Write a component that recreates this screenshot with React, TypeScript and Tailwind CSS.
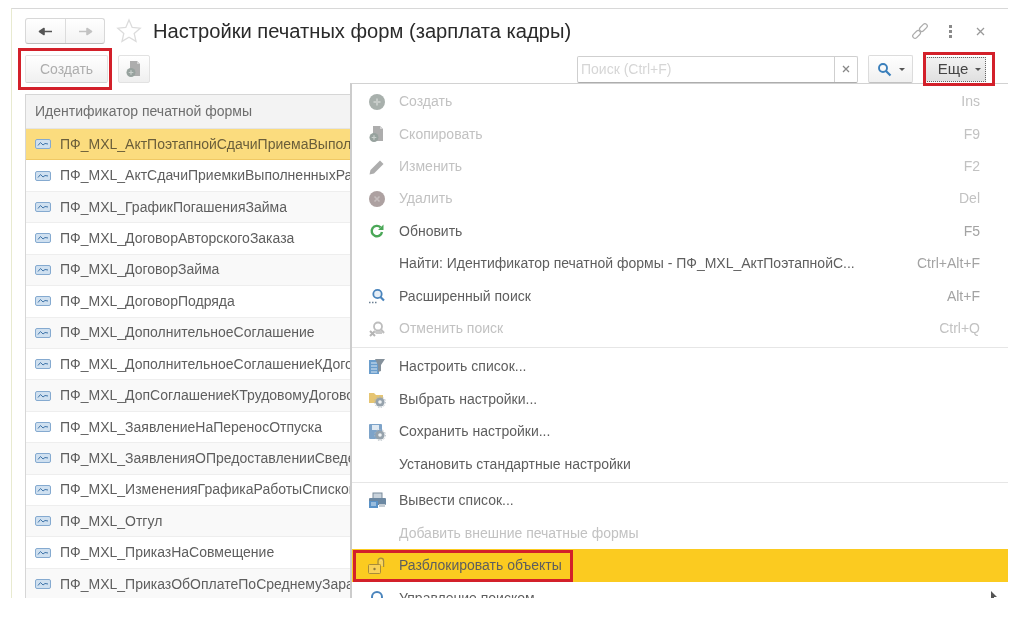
import type { ReactNode } from 'react';

const rows = [
  'ПФ_MXL_АктПоэтапнойСдачиПриемаВыполненныхРабот',
  'ПФ_MXL_АктСдачиПриемкиВыполненныхРабот',
  'ПФ_MXL_ГрафикПогашенияЗайма',
  'ПФ_MXL_ДоговорАвторскогоЗаказа',
  'ПФ_MXL_ДоговорЗайма',
  'ПФ_MXL_ДоговорПодряда',
  'ПФ_MXL_ДополнительноеСоглашение',
  'ПФ_MXL_ДополнительноеСоглашениеКДоговору',
  'ПФ_MXL_ДопСоглашениеКТрудовомуДоговору',
  'ПФ_MXL_ЗаявлениеНаПереносОтпуска',
  'ПФ_MXL_ЗаявленияОПредоставленииСведений',
  'ПФ_MXL_ИзмененияГрафикаРаботыСпискомСотрудников',
  'ПФ_MXL_Отгул',
  'ПФ_MXL_ПриказНаСовмещение',
  'ПФ_MXL_ПриказОбОплатеПоСреднемуЗаработку',
];

function RowIcon() {
  return (
    <svg width="16" height="10" viewBox="0 0 16 10" className="shrink-0">
      <rect x="0.5" y="0.5" width="15" height="9" rx="1.5" fill="#cfe0f0" stroke="#85aad0" />
      <path d="M3 6.5 L5.5 3.5 L8 6 L10 4.5 L13 5" fill="none" stroke="#3f74a8" strokeWidth="1" />
    </svg>
  );
}

function CopyIcon() {
  return (
    <svg width="18" height="18" viewBox="0 0 18 18">
      <path d="M5 1h7l3 3v12H5z" fill="#adadad" />
      <path d="M12 1l3 3h-3z" fill="#d2d2d2" />
      <circle cx="6" cy="12.5" r="4.5" fill="#97a29e" />
      <path d="M6 10.2v4.6M3.7 12.5h4.6" stroke="#c9cfcc" strokeWidth="1.2" />
    </svg>
  );
}

const icons: Record<string, ReactNode> = {
  plus: (
    <svg width="18" height="18" viewBox="0 0 18 18">
      <circle cx="9" cy="9" r="8" fill="#a8b0ac" />
      <path d="M9 5.5v7M5.5 9h7" stroke="#c6cbc8" strokeWidth="2" />
    </svg>
  ),
  copy: <CopyIcon />,
  pencil: (
    <svg width="18" height="18" viewBox="0 0 18 18">
      <path d="M1.5 16.5l1-4.5L12 2.5 15.5 6 6 15.5z" fill="#adadad" />
    </svg>
  ),
  del: (
    <svg width="18" height="18" viewBox="0 0 18 18">
      <circle cx="9" cy="9" r="8" fill="#ada1a1" />
      <path d="M6.5 6.5l5 5M11.5 6.5l-5 5" stroke="#c6bebe" strokeWidth="1.6" />
    </svg>
  ),
  refresh: (
    <svg width="18" height="18" viewBox="0 0 18 18">
      <path d="M14 10a5.2 5.2 0 1 1-1.4-4.6" fill="none" stroke="#4aa757" strokeWidth="2.4" />
      <path d="M15.5 2.5v5.5H10z" fill="#4aa757" />
    </svg>
  ),
  search: (
    <svg width="18" height="18" viewBox="0 0 18 18">
      <circle cx="9.5" cy="7" r="4.2" fill="#e6eef6" stroke="#4a84bc" strokeWidth="1.8" />
      <path d="M12.5 10l3.5 3.5" stroke="#4a84bc" strokeWidth="2.2" />
      <path d="M1 15.5h8" stroke="#6b7f92" strokeWidth="1.4" strokeDasharray="1.5 1.5" />
    </svg>
  ),
  cancel: (
    <svg width="18" height="18" viewBox="0 0 18 18">
      <circle cx="10" cy="6.5" r="4" fill="none" stroke="#bdbdbd" strokeWidth="1.8" />
      <path d="M13 9.5l3 3.5" stroke="#bdbdbd" strokeWidth="2" />
      <path d="M2 11l5 5M7 11l-5 5" stroke="#b5b5b5" strokeWidth="2" />
      <path d="M6 11h8v3H8z" fill="#c9c9c9" />
    </svg>
  ),
  filter: (
    <svg width="18" height="18" viewBox="0 0 18 18">
      <rect x="1" y="2" width="10" height="14" fill="#6a9dcc" />
      <path d="M3 5h6M3 8h6M3 11h6M3 14h6" stroke="#dbe8f3" strokeWidth="1" />
      <path d="M7 1h10l-4 6v6l-3 1V7z" fill="#85919b" />
    </svg>
  ),
  folder: (
    <svg width="18" height="18" viewBox="0 0 18 18">
      <path d="M1 3h5l2 2h7v8H1z" fill="#e6c572" />
      <circle cx="12" cy="12" r="4.6" fill="#96a2ac" />
      <circle cx="12" cy="12" r="1.8" fill="#eef1f3" />
      <circle cx="12" cy="12" r="5.4" fill="none" stroke="#aeb7be" strokeWidth="1" strokeDasharray="1.5 1.5" />
    </svg>
  ),
  save: (
    <svg width="18" height="18" viewBox="0 0 18 18">
      <rect x="1" y="1" width="13" height="15" rx="1" fill="#7da3c9" />
      <rect x="4" y="2" width="7" height="5" fill="#dfe9f2" />
      <circle cx="12" cy="12" r="4.6" fill="#96a2ac" />
      <circle cx="12" cy="12" r="1.8" fill="#eef1f3" />
      <circle cx="12" cy="12" r="5.4" fill="none" stroke="#aeb7be" strokeWidth="1" strokeDasharray="1.5 1.5" />
    </svg>
  ),
  print: (
    <svg width="18" height="18" viewBox="0 0 18 18">
      <rect x="5" y="1" width="9" height="6" fill="#c9d3dc" stroke="#7a8b9b" />
      <rect x="1" y="6" width="17" height="7" rx="1" fill="#6c88a2" />
      <rect x="1" y="9" width="9" height="7" fill="#5a92c7" />
      <path d="M3 11h5M3 13h5" stroke="#dbe8f3" strokeWidth="1" />
      <rect x="11" y="12" width="6" height="3" fill="#c4ccd3" />
    </svg>
  ),
  lock: (
    <svg width="20" height="18" viewBox="0 0 20 18">
      <path d="M11 7V4a2.8 2.8 0 0 1 5.6 0v6" fill="none" stroke="#a08a45" strokeWidth="1.2" />
      <path d="M13 7V4a1 1 0 0 1 2 0v5" fill="none" stroke="#f3dc98" strokeWidth="1" />
      <rect x="1.5" y="7.5" width="12" height="9" rx="1" fill="#f8d158" stroke="#a88c3a" />
      <circle cx="7.5" cy="12" r="1.2" fill="#8f7a3a" />
    </svg>
  ),
  manage: (
    <svg width="18" height="18" viewBox="0 0 18 18">
      <circle cx="9" cy="8" r="5" fill="none" stroke="#4a84bc" strokeWidth="2" />
    </svg>
  ),
};

type Item = { label: string; icon?: string; hint?: string; off?: boolean; active?: boolean; sep?: string };

const menu: Item[] = [
  { label: 'Создать', icon: 'plus', hint: 'Ins', off: true },
  { label: 'Скопировать', icon: 'copy', hint: 'F9', off: true },
  { label: 'Изменить', icon: 'pencil', hint: 'F2', off: true },
  { label: 'Удалить', icon: 'del', hint: 'Del', off: true },
  { label: 'Обновить', icon: 'refresh', hint: 'F5' },
  { label: 'Найти: Идентификатор печатной формы - ПФ_MXL_АктПоэтапнойС...', hint: 'Ctrl+Alt+F' },
  { label: 'Расширенный поиск', icon: 'search', hint: 'Alt+F' },
  { label: 'Отменить поиск', icon: 'cancel', hint: 'Ctrl+Q', off: true, sep: 'h-[6px]' },
  { label: 'Настроить список...', icon: 'filter' },
  { label: 'Выбрать настройки...', icon: 'folder' },
  { label: 'Сохранить настройки...', icon: 'save' },
  { label: 'Установить стандартные настройки', sep: 'h-[4.4px]' },
  { label: 'Вывести список...', icon: 'print' },
  { label: 'Добавить внешние печатные формы', off: true },
  { label: 'Разблокировать объекты', icon: 'lock', active: true },
  { label: 'Управление поиском', icon: 'manage' },
];

function MenuRow({ item }: { item: Item }) {
  return (
    <>
      <div className={`flex h-[32.4px] shrink-0 items-center pl-[15px] pr-[29px] ${item.active ? 'bg-[#fbcb20]' : ''}`}>
        <span className="flex w-[20px] shrink-0 justify-center">{item.icon ? icons[item.icon] : null}</span>
        <span className={`ml-[12px] flex-1 whitespace-nowrap ${item.off ? 'text-[#c2c2c2]' : 'text-[#5e5e5e]'}`}>{item.label}</span>
        {item.hint && <span className={item.off ? 'text-[#c2c2c2]' : 'text-[#a3a3a3]'}>{item.hint}</span>}
      </div>
      {item.sep && (
        <div className={`flex shrink-0 items-center ${item.sep}`}>
          <div className="h-px w-full bg-[#e6e6e6]" />
        </div>
      )}
    </>
  );
}

function Caret() {
  return <span className="ml-[7px] inline-block h-0 w-0 border-x-[3px] border-t-[3px] border-x-transparent border-t-[#555]" />;
}

export default function App() {
  return (
    <div className="relative h-[622px] w-[1020px] overflow-hidden bg-white pl-[11px] pt-[8px] font-['Liberation_Sans',Arial,sans-serif] text-[14px] blur-[0.5px]">
      <div className="relative h-[590px] w-[997px] overflow-hidden border-l border-t border-l-[#e8ead0] border-t-[#d8d8d8] pl-[13px] pr-[22px] pt-[9px]">
        {/* title bar */}
        <div className="flex h-[26px] items-center">
          <div className="flex h-[26px] w-[80px] rounded-[3px] border border-[#d8d8d8] border-b-[#bdbdbd] bg-gradient-to-b from-white to-[#f3f3f3]">
            <div className="flex w-[40px] items-center justify-center border-r border-[#dcdcdc]">
              <svg width="15" height="9" viewBox="0 0 15 9"><path d="M14 4.5H6M6 1.5L1.5 4.5l4.5 3z" fill="#555" stroke="#555" strokeWidth="1.6" strokeLinejoin="round" /></svg>
            </div>
            <div className="flex flex-1 items-center justify-center">
              <svg width="15" height="9" viewBox="0 0 15 9"><path d="M1 4.5h8M9 1.5l4.5 3-4.5 3z" fill="#c2c2c2" stroke="#c2c2c2" strokeWidth="1.6" strokeLinejoin="round" /></svg>
            </div>
          </div>
          <svg width="26" height="26" viewBox="0 0 26 26" className="ml-[11px]">
            <path d="M13 2l3.2 7.4 8 .8-6 5.3 1.8 7.9L13 19.2 6 23.4l1.8-7.9-6-5.3 8-.8z" fill="#fff" stroke="#dcdcdc" strokeWidth="1.3" />
          </svg>
          <div className="ml-[11px] whitespace-nowrap text-[20.15px] leading-none text-[#2a2a2a]">Настройки печатных форм (зарплата кадры)</div>
          <div className="ml-auto flex items-center">
            <svg width="18" height="18" viewBox="0 0 18 18" fill="none" stroke="#acacac" strokeWidth="1.2">
              <rect x="-4.5" y="-2.3" width="9" height="4.6" rx="2.3" transform="translate(5.6 12.4) rotate(-45)" />
              <rect x="-4.5" y="-2.3" width="9" height="4.6" rx="2.3" transform="translate(12.4 5.6) rotate(-45)" />
            </svg>
            <div className="ml-[20px] flex flex-col gap-[2px]">
              <span className="h-[3px] w-[3px] bg-[#8a8a8a]" />
              <span className="h-[3px] w-[3px] bg-[#8a8a8a]" />
              <span className="h-[3px] w-[3px] bg-[#8a8a8a]" />
            </div>
            <svg width="9" height="9" viewBox="0 0 9 9" className="ml-[24px] mr-[1px]"><path d="M1 1l7 7M8 1L1 8" stroke="#999" strokeWidth="1.3" /></svg>
          </div>
        </div>

        {/* command bar */}
        <div className="mt-[11px] flex h-[28px] items-center">
          <div className="flex h-[28px] w-[83px] items-center justify-center rounded-[2px] border border-[#e2e2e2] border-b-[#d2d2d2] bg-gradient-to-b from-white to-[#f0f0f0] text-[#adadad]">Создать</div>
          <div className="ml-[10px] flex h-[28px] w-[32px] items-center justify-center rounded-[2px] border border-[#e2e2e2] bg-gradient-to-b from-white to-[#efefef]">
            <CopyIcon />
          </div>
          <div className="ml-auto flex h-[27px] w-[281px] rounded-[2px] border border-[#cfcfcf] border-b-[#adadad]">
            <div className="flex flex-1 items-center pl-[3px] text-[#d6d6d6]">Поиск (Ctrl+F)</div>
            <div className="flex w-[23px] items-center justify-center border-l border-[#cfcfcf]">
              <svg width="8" height="8" viewBox="0 0 8 8"><path d="M1 1l6 6M7 1L1 7" stroke="#888" strokeWidth="1.3" /></svg>
            </div>
          </div>
          <div className="ml-[10px] flex h-[28px] w-[45px] items-center justify-center rounded-[2px] border border-[#dcdcdc] border-b-[#c2c2c2] bg-gradient-to-b from-white to-[#f0f0f0]">
            <svg width="15" height="15" viewBox="0 0 15 15"><circle cx="6" cy="6" r="4" fill="none" stroke="#3a7fbb" strokeWidth="1.9" /><path d="M9 9l4.5 4.5" stroke="#3a7fbb" strokeWidth="2.2" /></svg>
            <Caret />
          </div>
          <div className="ml-[12px] flex h-[25px] w-[61px] items-center justify-center border border-dotted border-[#666] bg-gradient-to-b from-[#f2f2f2] to-[#e0e0e0] pl-[8px] text-[15px] text-[#444]">
            Еще
            <Caret />
          </div>
        </div>

        {/* list */}
        <div className="mt-[11px] w-[360px] border-l border-t border-[#d6d6d6]">
          <div className="flex h-[34px] items-center border-b border-[#e4e4e4] bg-[#f3f3f3] pl-[9px] text-[#6e6e6e]">Идентификатор печатной формы</div>
          {rows.map((row, i) => (
            <div
              key={row}
              className={`flex h-[31.43px] items-center overflow-hidden whitespace-nowrap border-b pl-[9px] ${
                i === 0
                  ? 'border-[#f0c964] bg-[#fbdc7e] text-[#6a5e3a]'
                  : `border-[#eeeeee] text-[#5e5e5e] ${i % 2 === 1 ? 'bg-white' : 'bg-[#f9f9f9]'}`
              }`}
            >
              <RowIcon />
              <span className="ml-[9px]">{row}</span>
            </div>
          ))}
        </div>

        {/* dropdown menu */}
        <div className="absolute left-[338px] top-[74px] flex h-[520px] w-[659px] flex-col border-l-2 border-t border-l-[#cccccc] border-t-[#d2d2d2] bg-white pt-[1.6px]">
          {menu.map(item => (
            <MenuRow key={item.label} item={item} />
          ))}
          <svg width="8" height="10" viewBox="0 0 8 10" className="absolute left-[638px] top-[507px]"><path d="M1 0l6 6H4v3H1z" fill="#555" /></svg>
        </div>
      </div>

      {/* red annotation frames */}
      <div className="absolute left-[18px] top-[48px] h-[42px] w-[94px] border-[3px] border-[#d3202a]" />
      <div className="absolute left-[923px] top-[52px] h-[34px] w-[72px] border-[3px] border-[#d3202a]" />
      <div className="absolute left-[353px] top-[550px] h-[32px] w-[220px] border-[3px] border-[#d3202a]" />
    </div>
  );
}
